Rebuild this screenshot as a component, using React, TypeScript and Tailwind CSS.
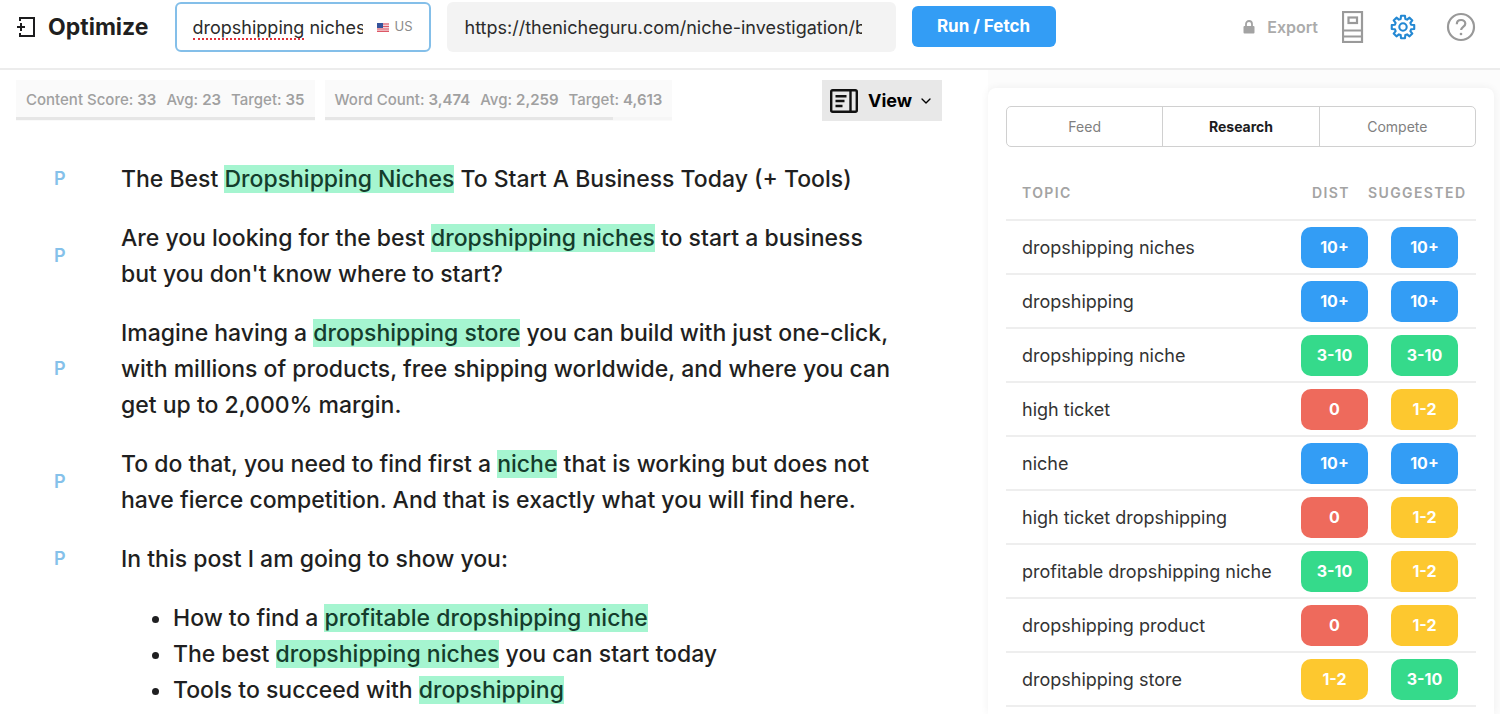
import { useState } from 'react';
import type { ReactNode } from 'react';
import { ChevronDown } from 'lucide-react';

type Level = '0' | '1-2' | '3-10' | '10+';

interface Topic {
    name: string;
    dist: Level;
    suggested: Level;
}

const TOPICS: Topic[] = [
    { name: 'dropshipping niches', dist: '10+', suggested: '10+' },
    { name: 'dropshipping', dist: '10+', suggested: '10+' },
    { name: 'dropshipping niche', dist: '3-10', suggested: '3-10' },
    { name: 'high ticket', dist: '0', suggested: '1-2' },
    { name: 'niche', dist: '10+', suggested: '10+' },
    { name: 'high ticket dropshipping', dist: '0', suggested: '1-2' },
    { name: 'profitable dropshipping niche', dist: '3-10', suggested: '1-2' },
    { name: 'dropshipping product', dist: '0', suggested: '1-2' },
    { name: 'dropshipping store', dist: '1-2', suggested: '3-10' },
];

const LEVEL_COLORS: Record<Level, string> = {
    '0': 'bg-[#ee6a5c]',
    '1-2': 'bg-[#fdc82f]',
    '3-10': 'bg-[#35da8b]',
    '10+': 'bg-[#339df5]',
};

const TABS = ['Feed', 'Research', 'Compete'];

const BackIcon = () => (
    <svg width="20" height="22" viewBox="0 0 20 22" fill="none" stroke="#1c1c1e" strokeWidth="2">
        <path d="M4 5V2h14v18H4v-3" />
        <path d="M1 11h8M5 7v8" />
    </svg>
);

const FlagIcon = () => (
    <svg width="12" height="9" viewBox="0 0 12 9">
        <rect width="12" height="9" fill="#f3d3d8" />
        <path d="M0 1h12M0 3.5h12M0 6h12M0 8.3h12" stroke="#dd5866" strokeWidth="1.2" />
        <rect width="6" height="5" fill="#35539b" />
    </svg>
);

const LockIcon = () => (
    <svg width="12" height="14" viewBox="0 0 12 14">
        <path d="M3 7V4a3 3 0 0 1 6 0v3" fill="none" stroke="#a3a3a3" strokeWidth="1.8" />
        <rect x="0.5" y="6" width="11" height="7.5" rx="1" fill="#a3a3a3" />
    </svg>
);

const DocIcon = () => (
    <svg width="22" height="32" viewBox="0 0 22 32" fill="none" stroke="#9a9a9a" strokeWidth="2.2">
        <rect x="1" y="1" width="19" height="30" />
        <rect x="6.5" y="6.5" width="8.5" height="5.5" />
        <path d="M2 19.5h18M2 25.5h18" />
    </svg>
);

// eight teeth: each one is two points on the outer radius and two on the inner
const GEAR_POINTS = Array.from({ length: 8 }, (_, i) =>
    [[-16, 8.4], [-10, 11.4], [10, 11.4], [16, 8.4]]
        .map(([offset, r]) => {
            const a = ((i * 45 + offset) * Math.PI) / 180;
            return `${(13 + r * Math.sin(a)).toFixed(2)},${(13 - r * Math.cos(a)).toFixed(2)}`;
        })
        .join(' ')
).join(' ');

const GearIcon = () => (
    <svg width="26" height="26" viewBox="0 0 26 26" fill="none" stroke="#2388d3" strokeWidth="2.1" strokeLinejoin="round">
        <polygon points={GEAR_POINTS} />
        <circle cx="13" cy="13" r="3.7" />
    </svg>
);

const HelpIcon = () => (
    <svg width="30" height="30" viewBox="0 0 30 30" fill="none" stroke="#999999" strokeWidth="2.2">
        <circle cx="15" cy="15" r="13" />
        <path d="M10.8 12.2c0-2.7 1.9-4.2 4.3-4.2s4.2 1.6 4.2 3.8c0 3-4.2 3.3-4.2 6.2" />
        <circle cx="15" cy="22" r="0.6" fill="#999999" strokeWidth="1.5" />
    </svg>
);

const LayoutIcon = () => (
    <svg width="28" height="24" viewBox="0 0 28 24" fill="none" stroke="#111" strokeWidth="2.4">
        <rect x="1.2" y="1.2" width="25.6" height="21.6" rx="1.5" />
        <path d="M20.5 1v22" />
        <path d="M5.5 7.2h11M5.5 12h9M5.5 17h7" />
    </svg>
);

const Mark = ({ children }: { children: ReactNode }) => (
    <mark className="bg-[#a5f5d0] text-[#143d2c]">{children}</mark>
);

const Block = ({ children }: { children: ReactNode }) => (
    <div className="flex items-center">
        <span className="w-[67px] shrink-0 text-lg font-semibold text-[#85c1ea]">P</span>
        <p>{children}</p>
    </div>
);

interface StatProps {
    label: string;
    value: string;
    avg: string;
    target: string;
    progress: number;
}

const Stat = ({ label, value, avg, target, progress }: StatProps) => (
    <div className="bg-[#fafafa]">
        <div className="flex h-[37px] items-center gap-2.5 px-2.5 pt-1 text-[15px] font-medium whitespace-nowrap text-[#a0a0a0]">
            <span>{label}: <b className="font-semibold">{value}</b></span>
            <span>Avg: <b className="font-semibold">{avg}</b></span>
            <span>Target: <b className="font-semibold">{target}</b></span>
        </div>
        <div className="h-[3px] bg-[#f6f6f6]">
            <div className="h-full bg-[#e6e6e6]" style={{ width: `${progress}%` }} />
        </div>
    </div>
);

const Pill = ({ level }: { level: Level }) => (
    <span className={`ml-auto flex h-[41px] w-[67px] items-center justify-center rounded-[10px] text-base font-bold text-white ${LEVEL_COLORS[level]}`}>
        {level}
    </span>
);

export default function App() {
    const [keyword, setKeyword] = useState('dropshipping niches');
    const [url, setUrl] = useState('https://thenicheguru.com/niche-investigation/best-dropshipping-niches');
    const [tab, setTab] = useState('Research');

    return (
        <div className="flex h-screen flex-col overflow-hidden bg-white font-['Inter','Liberation_Sans',sans-serif] text-[#1f1f21]">
            <header className="flex h-[70px] shrink-0 items-start border-b-2 border-[#ececec] pt-0.5 pr-6 pl-4">
                <a href="#" className="mr-[26px] flex h-[50px] items-center gap-3">
                    <BackIcon />
                    <span className="text-[23px] font-bold">Optimize</span>
                </a>
                <div className="flex h-[50px] w-[256px] items-center rounded-md border-2 border-[#84bfe9] px-4">
                    <div className="relative w-[170px] pt-0.5">
                        <input
                            aria-label="Keyword"
                            className="block w-full bg-transparent text-lg text-[#2b2b2b] outline-none"
                            value={keyword}
                            spellCheck={false}
                            onChange={e => setKeyword(e.target.value)}
                        />
                        <span className="pointer-events-none absolute bottom-0.5 left-0 w-[111px] border-b-2 border-dotted border-[#e0313a]" />
                    </div>
                    <span className="ml-auto flex items-center gap-1.5 text-[13px] text-[#8b8b8b]">
                        <FlagIcon /> US
                    </span>
                </div>
                <div className="ml-4 flex h-[50px] min-w-0 max-w-[449px] flex-1 items-center rounded-md bg-[#f3f3f3] pt-0.5 pr-[34px] pl-[18px]">
                    <input
                        aria-label="Page URL"
                        className="w-full bg-transparent text-lg text-[#2b2b2b] outline-none"
                        value={url}
                        onChange={e => setUrl(e.target.value)}
                    />
                </div>
                <button className="mt-1 ml-4 h-[41px] w-[144px] shrink-0 rounded-md bg-[#339df5] text-[17px] font-bold text-white">
                    Run / Fetch
                </button>
                <div className="ml-auto flex h-[50px] items-center">
                    <button className="mr-6 flex items-center gap-3 text-base font-semibold text-[#ababab]">
                        <LockIcon /> Export
                    </button>
                    <button aria-label="Document" className="mr-[26px]"><DocIcon /></button>
                    <button aria-label="Settings" className="mr-[30px]"><GearIcon /></button>
                    <button aria-label="Help"><HelpIcon /></button>
                </div>
            </header>

            <div className="grid min-h-0 flex-1 grid-cols-[247fr_128fr]">
                <main className="min-w-0 overflow-hidden pt-2.5 pr-[46px] pl-4">
                    <div className="flex gap-2.5">
                        <Stat label="Content Score" value="33" avg="23" target="35" progress={100} />
                        <Stat label="Word Count" value="3,474" avg="2,259" target="4,613" progress={83} />
                        <button className="ml-auto flex h-[41px] w-[120px] items-center justify-center gap-2.5 bg-[#e8e8e8] text-lg font-bold text-black">
                            <LayoutIcon />
                            <span className="flex items-center gap-1.5">View <ChevronDown size={16} /></span>
                        </button>
                    </div>

                    <article className="mt-10 flex flex-col gap-[23px] pr-10 pl-[38px] text-[23px] leading-9 font-medium">
                        <Block>The Best <Mark>Dropshipping Niches</Mark> To Start A Business Today (+ Tools)</Block>
                        <Block>
                            Are you looking for the best <Mark>dropshipping niches</Mark> to start a business but you don't know where to start?
                        </Block>
                        <Block>
                            Imagine having a <Mark>dropshipping store</Mark> you can build with just one-click, with millions of products, free shipping worldwide, and where you can get up to 2,000% margin.
                        </Block>
                        <Block>
                            To do that, you need to find first a <Mark>niche</Mark> that is working but does not have fierce competition. And that is exactly what you will find here.
                        </Block>
                        <Block>In this post I am going to show you:</Block>
                        <ul className="list-disc pl-[119px]">
                            <li>How to find a <Mark>profitable dropshipping niche</Mark></li>
                            <li>The best <Mark>dropshipping niches</Mark> you can start today</li>
                            <li>Tools to succeed with <Mark>dropshipping</Mark></li>
                        </ul>
                    </article>
                </main>

                <aside className="min-w-0 bg-[#fcfcfc] pt-[18px] pr-1.5">
                    <div className="h-full rounded-t-lg bg-white px-[18px] pt-[18px] shadow-[0_0_8px_rgba(0,0,0,0.06)]">
                        <div role="tablist" className="flex h-[41px] divide-x divide-[#d0d0d0] rounded-[5px] border border-[#d0d0d0]">
                            {TABS.map(name => (
                                <button
                                    key={name}
                                    role="tab"
                                    aria-selected={tab === name}
                                    className={`flex-1 text-sm ${tab === name ? 'font-bold text-[#1c1c1e]' : 'text-[#808080]'}`}
                                    onClick={() => setTab(name)}
                                >
                                    {name}
                                </button>
                            ))}
                        </div>

                        <table className="mt-[19px] w-full table-fixed">
                            <thead>
                                <tr className="h-[54px] border-b-2 border-[#eeeeee] text-sm tracking-widest text-[#a3a3a3]">
                                    <th className="pl-4 text-left font-semibold">TOPIC</th>
                                    <th className="w-[80px] pr-[18px] text-right font-semibold">DIST</th>
                                    <th className="w-[108px] pr-2.5 text-right font-semibold">SUGGESTED</th>
                                </tr>
                            </thead>
                            <tbody>
                                {TOPICS.map(topic => (
                                    <tr key={topic.name} className="h-[54px] border-b-2 border-[#eeeeee]">
                                        <td className="truncate pt-0.5 pl-4 text-lg text-[#333]">{topic.name}</td>
                                        <td><Pill level={topic.dist} /></td>
                                        <td className="pr-[18px]"><Pill level={topic.suggested} /></td>
                                    </tr>
                                ))}
                            </tbody>
                        </table>
                    </div>
                </aside>
            </div>
        </div>
    );
}
